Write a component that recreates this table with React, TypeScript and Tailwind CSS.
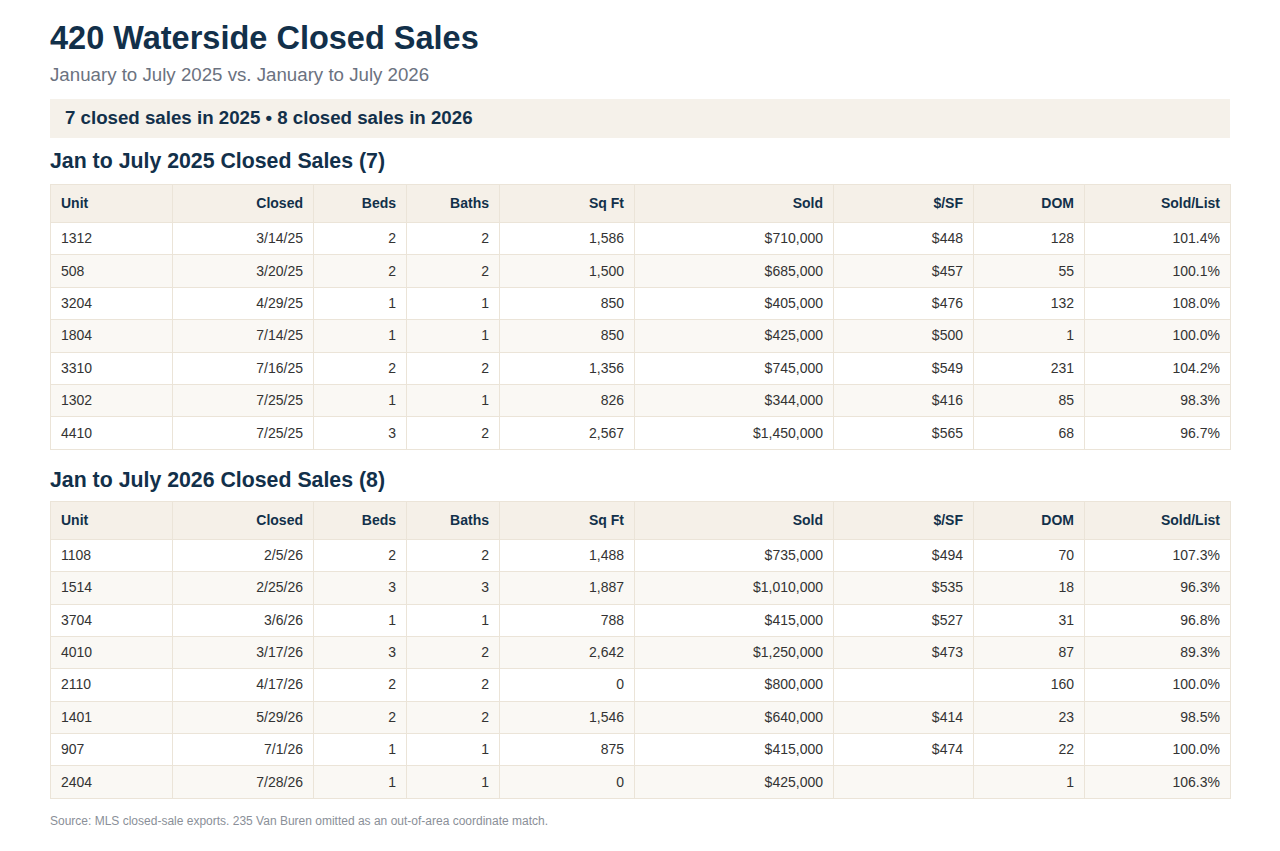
const cols = [
  { label: "Unit", w: "w-[122px]", align: "text-left" },
  { label: "Closed", w: "w-[141px]", align: "text-right" },
  { label: "Beds", w: "w-[93px]", align: "text-right" },
  { label: "Baths", w: "w-[93px]", align: "text-right" },
  { label: "Sq Ft", w: "w-[135px]", align: "text-right" },
  { label: "Sold", w: "w-[199px]", align: "text-right" },
  { label: "$/SF", w: "w-[140px]", align: "text-right" },
  { label: "DOM", w: "w-[111px]", align: "text-right" },
  { label: "Sold/List", w: "w-[146px]", align: "text-right" },
];

const sales2025 = [
  ["1312", "3/14/25", "2", "2", "1,586", "$710,000", "$448", "128", "101.4%"],
  ["508", "3/20/25", "2", "2", "1,500", "$685,000", "$457", "55", "100.1%"],
  ["3204", "4/29/25", "1", "1", "850", "$405,000", "$476", "132", "108.0%"],
  ["1804", "7/14/25", "1", "1", "850", "$425,000", "$500", "1", "100.0%"],
  ["3310", "7/16/25", "2", "2", "1,356", "$745,000", "$549", "231", "104.2%"],
  ["1302", "7/25/25", "1", "1", "826", "$344,000", "$416", "85", "98.3%"],
  ["4410", "7/25/25", "3", "2", "2,567", "$1,450,000", "$565", "68", "96.7%"],
];

const sales2026 = [
  ["1108", "2/5/26", "2", "2", "1,488", "$735,000", "$494", "70", "107.3%"],
  ["1514", "2/25/26", "3", "3", "1,887", "$1,010,000", "$535", "18", "96.3%"],
  ["3704", "3/6/26", "1", "1", "788", "$415,000", "$527", "31", "96.8%"],
  ["4010", "3/17/26", "3", "2", "2,642", "$1,250,000", "$473", "87", "89.3%"],
  ["2110", "4/17/26", "2", "2", "0", "$800,000", "", "160", "100.0%"],
  ["1401", "5/29/26", "2", "2", "1,546", "$640,000", "$414", "23", "98.5%"],
  ["907", "7/1/26", "1", "1", "875", "$415,000", "$474", "22", "100.0%"],
  ["2404", "7/28/26", "1", "1", "0", "$425,000", "", "1", "106.3%"],
];

function SalesTable({ rows }: { rows: string[][] }) {
  return (
    <table className="w-full border-collapse table-fixed text-[14px]">
      <thead>
        <tr className="bg-[#f5f0e8]">
          {cols.map((c) => (
            <th
              key={c.label}
              className={`${c.w} ${c.align} h-[38px] px-[10px] border border-[#ebe4d8] font-bold text-[#12304a]`}
            >
              {c.label}
            </th>
          ))}
        </tr>
      </thead>
      <tbody>
        {rows.map((row, i) => (
          <tr key={i} className={i % 2 === 1 ? "bg-[#faf8f4]" : "bg-white"}>
            {row.map((cell, j) => (
              <td
                key={j}
                className={`${cols[j].align} h-[32.4px] px-[10px] border border-[#ebe4d8] text-[#333333]`}
              >
                {cell}
              </td>
            ))}
          </tr>
        ))}
      </tbody>
    </table>
  );
}

export default function App() {
  return (
    <div className="bg-white min-h-screen px-[50px] pt-[18px] font-['Liberation_Sans',Arial,sans-serif]">
      <h1 className="text-[32.5px] leading-[40px] font-bold text-[#12304a]">420 Waterside Closed Sales</h1>
      <p className="mt-[6px] text-[18.7px] leading-[22px] text-[#6b7280]">
        January to July 2025 vs. January to July 2026
      </p>

      <div className="mt-[13px] bg-[#f5f1ea] h-[39px] px-[15px] flex items-center">
        <span className="text-[18.7px] font-bold text-[#12304a]">
          7 closed sales in 2025 • 8 closed sales in 2026
        </span>
      </div>

      <h2 className="mt-[10px] text-[21.3px] leading-[26px] font-bold text-[#12304a]">
        Jan to July 2025 Closed Sales (7)
      </h2>
      <div className="mt-[10px]">
        <SalesTable rows={sales2025} />
      </div>

      <h2 className="mt-[17px] text-[21.3px] leading-[26px] font-bold text-[#12304a]">
        Jan to July 2026 Closed Sales (8)
      </h2>
      <div className="mt-[8px]">
        <SalesTable rows={sales2026} />
      </div>

      <p className="mt-[13px] text-[12px] text-[#8a8f98]">
        Source: MLS closed-sale exports. 235 Van Buren omitted as an out-of-area coordinate match.
      </p>
    </div>
  );
}
